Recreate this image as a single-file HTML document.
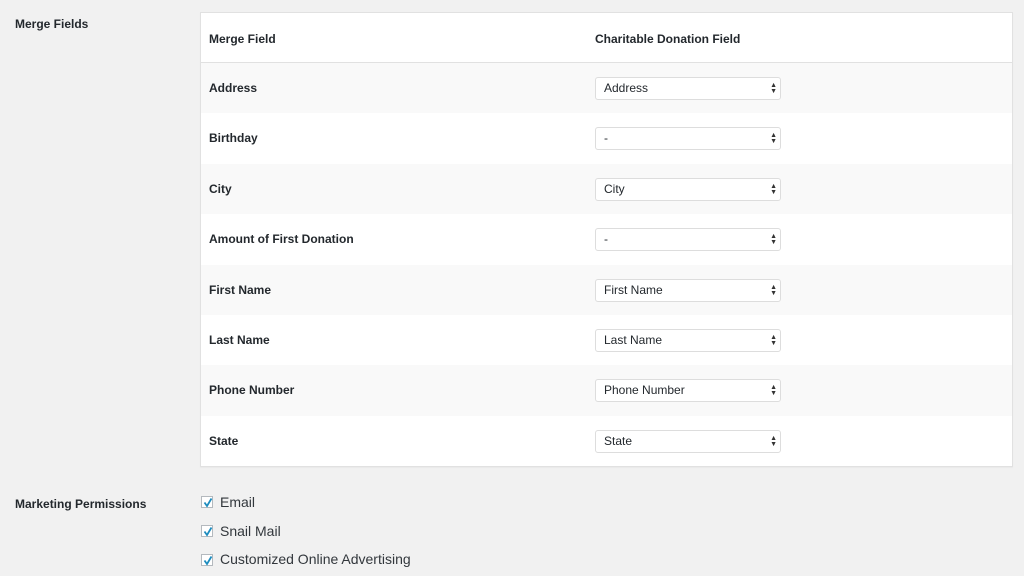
<!DOCTYPE html>
<html><head><style>
body{margin:0;background:#f1f1f1;font-family:"Liberation Sans",sans-serif;color:#23282d;width:1024px;height:576px;overflow:hidden;position:relative}
.lbl{position:absolute;left:15px;font-size:12px;font-weight:bold}
.tbl{position:absolute;left:200px;top:12px;width:811px;height:453px;background:#fff;border:1px solid #e1e1e1;box-shadow:0 1px 1px rgba(0,0,0,.04)}
.row{position:absolute;left:0;width:811px;height:50.4px}
.row.s{background:#f9f9f9}
.row .n{position:absolute;left:8px;top:18px;font-size:12px;font-weight:bold}
.sel{position:absolute;left:394px;top:14px;width:184px;height:21px;border:1px solid #ddd;border-radius:3px;background:#fff;font-size:12px;line-height:21px;box-sizing:content-box}
.sel span{position:absolute;left:8px}
.sel i{position:absolute;right:3px;top:5px;font-style:normal;font-size:7px;line-height:6px;color:#333}
.hd{position:absolute;top:19px;font-size:12px;font-weight:bold}
.cb{position:absolute;left:201px;width:12px;height:12px;border:1px solid #b4b9be;background:#fff;box-sizing:border-box}
.cb svg{position:absolute;left:1px;top:0}
.ct{position:absolute;left:220px;font-size:14px;color:#32373c}
</style></head><body>
<div class="lbl" style="top:17px">Merge Fields</div>
<div class="tbl">
<div class="hd" style="left:8px">Merge Field</div>
<div class="hd" style="left:394px">Charitable Donation Field</div>
<div style="position:absolute;top:49px;left:0;width:811px;height:1px;background:#e1e1e1"></div>
<div class="row s" style="top:50px"><div class="n">Address</div><div class="sel"><span>Address</span><i>▲<br>▼</i></div></div>
<div class="row" style="top:100.4px"><div class="n">Birthday</div><div class="sel"><span>-</span><i>▲<br>▼</i></div></div>
<div class="row s" style="top:150.8px"><div class="n">City</div><div class="sel"><span>City</span><i>▲<br>▼</i></div></div>
<div class="row" style="top:201.2px"><div class="n">Amount of First Donation</div><div class="sel"><span>-</span><i>▲<br>▼</i></div></div>
<div class="row s" style="top:251.6px"><div class="n">First Name</div><div class="sel"><span>First Name</span><i>▲<br>▼</i></div></div>
<div class="row" style="top:302px"><div class="n">Last Name</div><div class="sel"><span>Last Name</span><i>▲<br>▼</i></div></div>
<div class="row s" style="top:352.4px"><div class="n">Phone Number</div><div class="sel"><span>Phone Number</span><i>▲<br>▼</i></div></div>
<div class="row" style="top:402.8px"><div class="n">State</div><div class="sel"><span>State</span><i>▲<br>▼</i></div></div>
</div>
<div class="lbl" style="top:497px">Marketing Permissions</div>
<div class="cb" style="top:496px"><svg width="10" height="11" viewBox="0 0 10 11"><path d="M1.5 5.5L4 9L8.5 1.5" fill="none" stroke="#1e8cbe" stroke-width="1.8"/></svg></div>
<div class="ct" style="top:494px">Email</div>
<div class="cb" style="top:525px"><svg width="10" height="11" viewBox="0 0 10 11"><path d="M1.5 5.5L4 9L8.5 1.5" fill="none" stroke="#1e8cbe" stroke-width="1.8"/></svg></div>
<div class="ct" style="top:523px">Snail Mail</div>
<div class="cb" style="top:554px"><svg width="10" height="11" viewBox="0 0 10 11"><path d="M1.5 5.5L4 9L8.5 1.5" fill="none" stroke="#1e8cbe" stroke-width="1.8"/></svg></div>
<div class="ct" style="top:551px">Customized Online Advertising</div>
</body></html>
